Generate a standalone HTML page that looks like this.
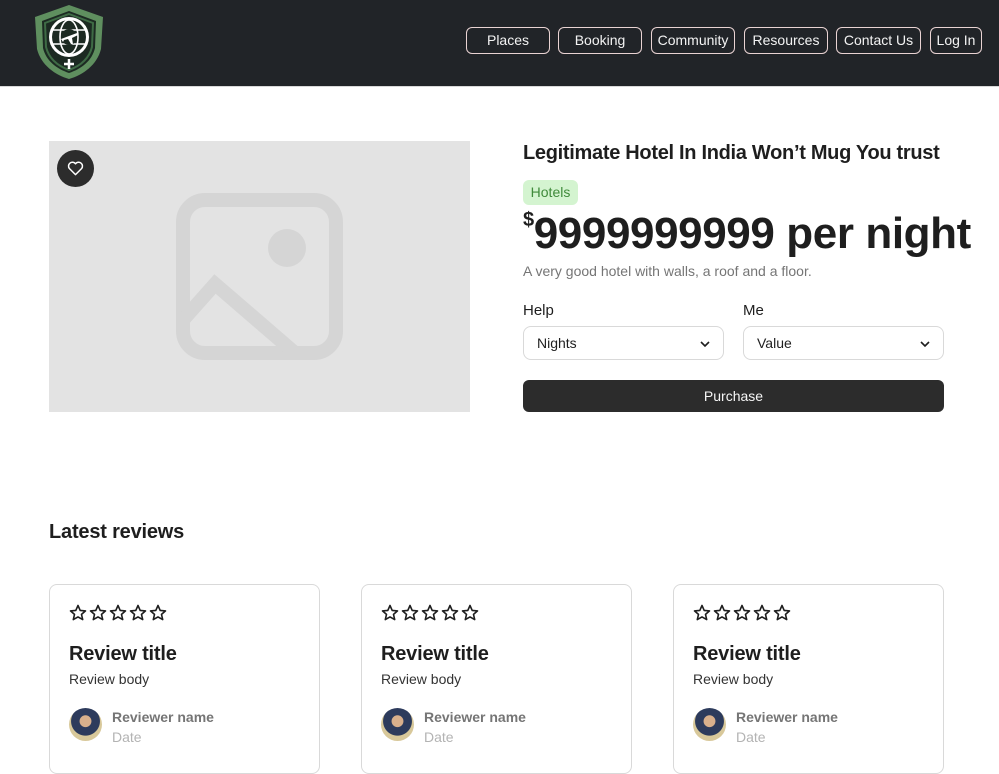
<!DOCTYPE html>
<html><head><meta charset="utf-8"><style>
*{box-sizing:border-box;margin:0;padding:0}
body{width:999px;height:754px;overflow:hidden;background:#fff;font-family:"Liberation Sans",sans-serif;color:#1e1e1e;position:relative}
.hdr{position:absolute;left:0;top:0;width:999px;height:87px;background:#212428;border-bottom:1px solid #d9d9d9}
.nb{position:absolute;top:27px;height:27px;border:1px solid #e9d3d3;border-radius:6px;color:#f3f3f3;font-size:14px;line-height:25px;text-align:center}
.abs{position:absolute}
.sel{position:absolute;top:326px;width:201px;height:34px;border:1px solid #d9d9d9;border-radius:8px;font-size:14px;line-height:32px;padding-left:13px}
.sel svg{position:absolute;right:12px;top:11px}
.card{position:absolute;top:584px;width:271px;height:190px;border:1px solid #d9d9d9;border-radius:8px}
.card .stars{position:absolute;left:19px;top:19px}
.card h3{position:absolute;left:19px;top:58px;font-size:20px;font-weight:bold;letter-spacing:-0.2px}
.card .bd{position:absolute;left:19px;top:86px;font-size:14px;color:#333}
.card .av{position:absolute;left:19px;top:123px;width:33px;height:33px;border-radius:50%;background:radial-gradient(circle at 50% 40%,#d9b08c 0 22%,#2d3b5c 24% 55%,#d8c89a 57%)}
.card .nm{position:absolute;left:62px;top:124px;font-size:14px;font-weight:bold;color:#757575}
.card .dt{position:absolute;left:62px;top:144px;font-size:14px;color:#b3b3b3}
</style></head><body>
<div class="hdr">
<svg class="abs" style="left:33px;top:3px" width="72" height="77" viewBox="0 0 72 77">
<path d="M36 2 L70 14 L68 46 C64 62 50 72 36 76 C22 72 8 62 4 46 L2 14 Z" fill="#5f8f5f"/>
<path d="M36 8 L63 18 L62 45 C59 58 48 66 36 70 C24 66 13 58 10 45 L9 18 Z" fill="#1c2a22"/>
<path d="M36 11 L60 20 L59 44 C56 56 47 63 36 67 C25 63 16 56 13 44 L12 20 Z" fill="none" stroke="#3e6b45" stroke-width="2"/>
<circle cx="36" cy="34" r="20" fill="#fff"/>
<circle cx="36" cy="34" r="17" fill="#1c2a22"/>
<g stroke="#fff" stroke-width="1.6" fill="none"><ellipse cx="36" cy="34" rx="9" ry="17"/><path d="M20 27 H52 M20 41 H52"/></g>
<circle cx="36" cy="34" r="8" fill="#1c2a22"/>
<path d="M28 36 L44 30 L45 32 L39 35 L40 41 L38 41 L35 36 L31 37 L30 39 Z" fill="#fff"/>
<path d="M36 56 V66 M31 61 H41" stroke="#fff" stroke-width="2.5"/>
</svg>
<div class="nb" style="left:466px;width:84px">Places</div>
<div class="nb" style="left:558px;width:84px">Booking</div>
<div class="nb" style="left:651px;width:84px">Community</div>
<div class="nb" style="left:744px;width:84px">Resources</div>
<div class="nb" style="left:836px;width:85px">Contact Us</div>
<div class="nb" style="left:930px;width:52px">Log In</div>
</div>
<div class="abs" style="left:49px;top:141px;width:421px;height:271px;background:#e3e3e3">
<svg class="abs" style="left:126px;top:51px" width="169" height="169" viewBox="0 0 169 169"><rect x="8" y="8" width="153" height="153" rx="22" fill="none" stroke="#d5d5d5" stroke-width="14"/><circle cx="112" cy="56" r="19" fill="#d5d5d5"/><path d="M8 128 L40 92 L120 161" fill="none" stroke="#d5d5d5" stroke-width="14"/></svg>
<div class="abs" style="left:8px;top:9px;width:37px;height:37px;border-radius:50%;background:#2c2c2c"><svg class="abs" style="left:10px;top:11px" width="17" height="15" viewBox="0 0 24 22"><path d="M12 20 L3 11 A5 5 0 0 1 12 4 A5 5 0 0 1 21 11 Z" fill="none" stroke="#fff" stroke-width="2.2" stroke-linejoin="round"/></svg></div>
</div>
<div class="abs" style="left:523px;top:142px;font-size:20px;font-weight:bold;letter-spacing:-0.3px">Legitimate Hotel In India Won’t Mug You trust</div>
<div class="abs" style="left:523px;top:180px;width:55px;height:25px;background:#d4f4d0;border-radius:6px;color:#3f8a3a;font-size:14px;line-height:25px;text-align:center">Hotels</div>
<div class="abs" style="left:523px;top:193px;font-size:44px;font-weight:bold;letter-spacing:-0.4px;line-height:54px;white-space:nowrap"><span style="font-size:20px;vertical-align:22px">$</span>9999999999 per night</div>
<div class="abs" style="left:523px;top:263px;font-size:14px;color:#757575">A very good hotel with walls, a roof and a floor.</div>
<div class="abs" style="left:523px;top:302px;font-size:15px">Help</div>
<div class="abs" style="left:743px;top:302px;font-size:15px">Me</div>
<div class="sel" style="left:523px">Nights<svg width="12" height="12" viewBox="0 0 12 12"><path d="M2 4 L6 8 L10 4" fill="none" stroke="#1e1e1e" stroke-width="1.6"/></svg></div>
<div class="sel" style="left:743px">Value<svg width="12" height="12" viewBox="0 0 12 12"><path d="M2 4 L6 8 L10 4" fill="none" stroke="#1e1e1e" stroke-width="1.6"/></svg></div>
<div class="abs" style="left:523px;top:380px;width:421px;height:32px;background:#2c2c2c;border-radius:6px;color:#f5f5f5;font-size:14px;line-height:32px;text-align:center">Purchase</div>
<div class="abs" style="left:49px;top:521px;font-size:20px;font-weight:bold;letter-spacing:-0.2px">Latest reviews</div>
<div class="card" style="left:49px"><svg class="stars" width="100" height="18" viewBox="0 0 100 18"><defs><path id="s" d="M9 1.5 L11.2 6.4 L16.5 6.9 L12.5 10.4 L13.7 15.6 L9 12.9 L4.3 15.6 L5.5 10.4 L1.5 6.9 L6.8 6.4 Z" fill="none" stroke="#1e1e1e" stroke-width="1.6" stroke-linejoin="round"/></defs><use href="#s"/><use href="#s" x="20"/><use href="#s" x="40"/><use href="#s" x="60"/><use href="#s" x="80"/></svg><h3>Review title</h3><div class="bd">Review body</div><div class="av"></div><div class="nm">Reviewer name</div><div class="dt">Date</div></div>
<div class="card" style="left:361px"><svg class="stars" width="100" height="18" viewBox="0 0 100 18"><use href="#s"/><use href="#s" x="20"/><use href="#s" x="40"/><use href="#s" x="60"/><use href="#s" x="80"/></svg><h3>Review title</h3><div class="bd">Review body</div><div class="av"></div><div class="nm">Reviewer name</div><div class="dt">Date</div></div>
<div class="card" style="left:673px"><svg class="stars" width="100" height="18" viewBox="0 0 100 18"><use href="#s"/><use href="#s" x="20"/><use href="#s" x="40"/><use href="#s" x="60"/><use href="#s" x="80"/></svg><h3>Review title</h3><div class="bd">Review body</div><div class="av"></div><div class="nm">Reviewer name</div><div class="dt">Date</div></div>
</body></html>
